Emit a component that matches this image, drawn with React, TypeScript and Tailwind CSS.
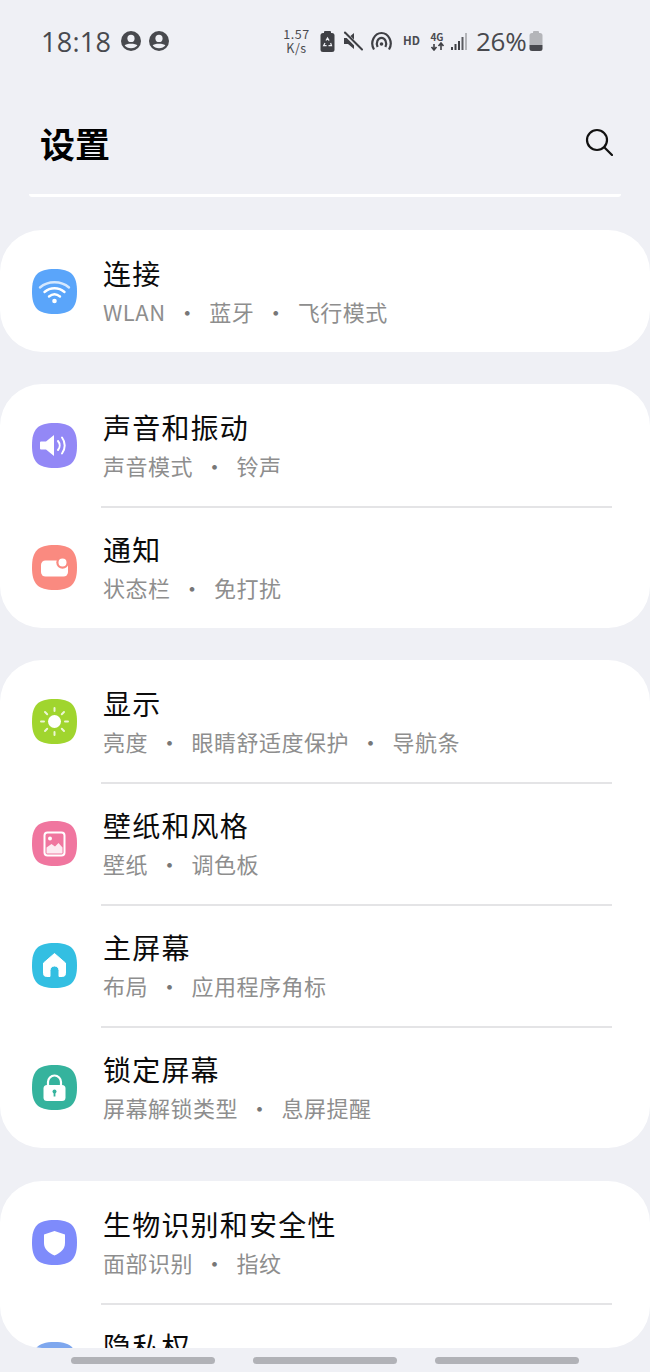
import React from "react";

const SQ = "M22.5 0C39 0 45 6 45 22.5C45 39 39 45 22.5 45C6 45 0 39 0 22.5C0 6 6 0 22.5 0Z";

function Tile({ color, children }: { color: string; children?: React.ReactNode }) {
  return (
    <svg width="45" height="45" viewBox="0 0 45 45" className="shrink-0">
      <path d={SQ} fill={color} />
      {children}
    </svg>
  );
}

const Wifi = () => (
  <Tile color="#5aa5fa">
    <g fill="none" stroke="#fff" strokeWidth="2.4" strokeLinecap="round">
      <path d="M8 18.5C16 11.5 29 11.5 37 18.5" opacity="0.75" />
      <path d="M12.5 23C18.5 18 26.5 18 32.5 23" />
      <path d="M17 27.5C20.5 24.7 24.5 24.7 28 27.5" />
    </g>
    <circle cx="22.5" cy="32" r="2.3" fill="#fff" />
  </Tile>
);

const Sound = () => (
  <Tile color="#9388f6">
    <path d="M9 18.5h5l8-6.5v21l-8-6.5H9a1 1 0 0 1-1-1v-6a1 1 0 0 1 1-1Z" fill="#fff" />
    <path d="M26 18c2.2 2.6 2.2 6.4 0 9" fill="none" stroke="#fff" strokeWidth="2" strokeLinecap="round" />
    <path d="M30 14.5c3.6 4.6 3.6 11.4 0 16" fill="none" stroke="#fff" strokeWidth="2" strokeLinecap="round" />
  </Tile>
);

const Notify = () => (
  <Tile color="#fa8a80">
    <rect x="9" y="15.5" width="27" height="16" rx="4.5" fill="#fff" />
    <circle cx="30.5" cy="17.5" r="6.2" fill="#fa8a80" />
    <circle cx="30.5" cy="17.5" r="4" fill="#fff" />
  </Tile>
);

const Sun = () => (
  <Tile color="#a0d52e">
    <circle cx="22.5" cy="22.5" r="6.5" fill="#fff" />
    <g stroke="#fff" strokeWidth="2" strokeLinecap="round" opacity="0.8">
      <path d="M22.5 9v3M22.5 33v3M9 22.5h3M33 22.5h3M13 13l2.2 2.2M29.8 29.8L32 32M13 32l2.2-2.2M29.8 15.2L32 13" />
    </g>
  </Tile>
);

const Wallpaper = () => (
  <Tile color="#f0769f">
    <rect x="12.5" y="11.5" width="20" height="23" rx="3" fill="none" stroke="#fff" strokeWidth="2" />
    <circle cx="18" cy="17.5" r="2" fill="#fff" />
    <path d="M14.5 32.5v-6l5-3.5 3.5 2.5 3.5-3.5 4 4.5v6Z" fill="#fff" opacity="0.85" />
  </Tile>
);

const Home = () => (
  <Tile color="#33bfe2">
    <path d="M22.5 10.5L33.5 20v10.5a3 3 0 0 1-3 3h-3.5v-6a4.5 4.5 0 0 0-9 0v6h-3.5a3 3 0 0 1-3-3V20Z" fill="#fff" stroke="#fff" strokeLinejoin="round" />
  </Tile>
);

const Lock = () => (
  <Tile color="#35b39d">
    <path d="M16 21v-4a6.5 6.5 0 0 1 13 0v4" fill="none" stroke="#fff" strokeWidth="2.2" />
    <rect x="11.5" y="20" width="22" height="16" rx="3.5" fill="#fff" />
    <circle cx="22.5" cy="26.5" r="2" fill="#35b39d" />
    <rect x="21.6" y="27" width="1.8" height="4.5" fill="#35b39d" />
  </Tile>
);

const Shield = () => (
  <Tile color="#7e8bfb">
    <path d="M22.5 11L33 14.5v8.5c0 6-4.5 10-10.5 12.5C16.5 33 12 29 12 23v-8.5Z" fill="#fff" />
  </Tile>
);

const Privacy = () => <Tile color="#7ea7ee" />;

type RowT = { title: string; sub: string[]; icon: React.ReactNode };

function Row({ row, divider }: { row: RowT; divider: boolean }) {
  return (
    <div className="relative flex h-[122px] items-center pl-8">
      {row.icon}
      <div className="ml-[26px] flex h-[76px] min-w-0 flex-col">
        <div className="mt-[1px] h-[39px] text-[28px] leading-[38px] tracking-[1.2px] text-[#0b0b0b]">{row.title}</div>
        {row.sub.length > 0 && (
          <div className="flex h-[36px] items-center text-[22px] leading-[36px] tracking-[0.5px] text-[#8e8e8e]">
            {row.sub.map((s, i) => (
              <React.Fragment key={s}>
                {i > 0 && <span className="mx-[10.5px] text-[#777]">·</span>}
                <span>{s}</span>
              </React.Fragment>
            ))}
          </div>
        )}
      </div>
      {divider && <div className="absolute -bottom-[2px] left-[101px] right-[38px] z-10 h-[2px] bg-[#e4e4e6]" />}
    </div>
  );
}

function Card({ rows }: { rows: RowT[] }) {
  return (
    <div className="shrink-0 overflow-hidden rounded-[42px] bg-white">
      {rows.map((r, i) => (
        <Row key={r.title} row={r} divider={i < rows.length - 1} />
      ))}
    </div>
  );
}

const Person = () => (
  <svg width="20" height="20" viewBox="0 0 20 20">
    <circle cx="10" cy="10" r="10" fill="#48494e" />
    <circle cx="10" cy="7.4" r="3.6" fill="#eff0f5" />
    <path d="M3.6 14.6c1.5-2.6 11.3-2.6 12.8 0-1.4 1.6-3.6 2.6-6.4 2.6s-5-1-6.4-2.6Z" fill="#eff0f5" />
  </svg>
);

function StatusRight() {
  return (
    <div className="flex items-center text-[#4a4b50]">
      <div className="flex w-[29px] flex-col items-center text-[12.5px] leading-[14px] tracking-[0.5px]">
        <span>1.57</span>
        <span>K/s</span>
      </div>
      <svg width="15" height="21" viewBox="0 0 15 21" className="ml-[9px]">
        <rect x="4" y="0" width="7" height="3" rx="1" fill="#3f4045" />
        <rect x="0.5" y="2" width="14" height="19" rx="2.5" fill="#3f4045" />
        <path d="M6 9.5L7.5 7l1.6 2.6M10.6 12l.9 2.6H8.5M6.6 14.6H3.6L5 12" fill="none" stroke="#eff0f5" strokeWidth="1.2" />
      </svg>
      <svg width="20" height="20" viewBox="0 0 20 20" className="ml-[8px]">
        <path d="M1 7h4l6-5v16l-6-5H1Z" fill="#3f4045" />
        <path d="M1 1.5L18 18.5" stroke="#eff0f5" strokeWidth="4" />
        <path d="M2 1.5L19 18.5" stroke="#3f4045" strokeWidth="2" strokeLinecap="round" />
      </svg>
      <svg width="23" height="20" viewBox="0 0 23 20" fill="none" stroke="#3f4045" strokeWidth="2.2" className="ml-[7px]">
        <path d="M4 18.5C-0.5 11 4.5 2 11.5 2s12 9 7.5 16.5" />
        <path d="M7.6 16C5.5 11.5 8 6.8 11.5 6.8s6 4.7 3.9 9.2" />
        <circle cx="11.5" cy="13" r="1.8" fill="#3f4045" stroke="none" />
      </svg>
      <span className="ml-[10px] w-[17px] text-[11.5px] font-bold leading-none">HD</span>
      <div className="ml-[9px] flex w-[16px] flex-col items-center">
        <span className="text-[10px] font-bold leading-[10px]">4G</span>
        <svg width="15" height="9" viewBox="0 0 15 9">
          <path d="M4 8V2M1.5 5L4 8l2.5-3M11 1v7M8.5 4L11 1l2.5 3" fill="none" stroke="#3f4045" strokeWidth="1.6" />
        </svg>
      </div>
      <svg width="16" height="17" viewBox="0 0 16 17" className="ml-[6px]">
        <rect x="0" y="14" width="2" height="3" fill="#3f4045" />
        <rect x="3.5" y="11" width="2" height="6" fill="#3f4045" />
        <rect x="7" y="8" width="2" height="9" fill="#3f4045" />
        <rect x="10.5" y="4" width="2" height="13" fill="#5a5b60" />
        <rect x="14" y="0" width="2" height="17" fill="#b4b5b9" />
      </svg>
      <span className="ml-[9px] w-[49px] font-['Open_Sans','Liberation_Sans',sans-serif] text-[26px] leading-none tracking-[-0.3px] text-[#48494e]">26%</span>
      <svg width="14" height="20" viewBox="0 0 14 20" className="ml-[4px]">
        <rect x="4" y="0" width="6" height="3" rx="1" fill="#b4b5b9" />
        <path d="M0.5 4.5a2.5 2.5 0 0 1 2.5-2.5h8a2.5 2.5 0 0 1 2.5 2.5V14H.5Z" fill="#b4b5b9" />
        <path d="M.5 14h13v3.5a2.5 2.5 0 0 1-2.5 2.5H3a2.5 2.5 0 0 1-2.5-2.5Z" fill="#48494e" />
      </svg>
    </div>
  );
}

const wlan: RowT[] = [{ title: "连接", sub: ["WLAN", "蓝牙", "飞行模式"], icon: <Wifi /> }];
const sound: RowT[] = [
  { title: "声音和振动", sub: ["声音模式", "铃声"], icon: <Sound /> },
  { title: "通知", sub: ["状态栏", "免打扰"], icon: <Notify /> },
];
const display: RowT[] = [
  { title: "显示", sub: ["亮度", "眼睛舒适度保护", "导航条"], icon: <Sun /> },
  { title: "壁纸和风格", sub: ["壁纸", "调色板"], icon: <Wallpaper /> },
  { title: "主屏幕", sub: ["布局", "应用程序角标"], icon: <Home /> },
  { title: "锁定屏幕", sub: ["屏幕解锁类型", "息屏提醒"], icon: <Lock /> },
];
const security: RowT[] = [
  { title: "生物识别和安全性", sub: ["面部识别", "指纹"], icon: <Shield /> },
  { title: "隐私权", sub: [], icon: <Privacy /> },
];

export default function App() {
  return (
    <div className="flex h-[1372px] w-[650px] flex-col overflow-hidden bg-[#eff0f5] font-['Noto_Sans_CJK_SC','Noto_Sans',sans-serif]">
      <div className="flex h-[82px] shrink-0 items-center pl-[41px] pr-[107px]">
        <span className="w-[70px] font-['Open_Sans','Liberation_Sans',sans-serif] text-[27px] leading-none tracking-[0.3px] text-[#48494e]">18:18</span>
        <div className="ml-[10px] flex gap-[8px]">
          <Person />
          <Person />
        </div>
        <div className="ml-auto">
          <StatusRight />
        </div>
      </div>
      <div className="flex h-[112px] shrink-0 items-center justify-between pl-[40px] pr-[37px] pt-[8px]">
        <h1 className="text-[35px] font-bold leading-none text-black">设置</h1>
        <svg width="28" height="28" viewBox="0 0 28 28" fill="none" stroke="#111" strokeWidth="2.2" strokeLinecap="round">
          <circle cx="12" cy="12" r="10" />
          <path d="M19.5 19.5L27 27" />
        </svg>
      </div>
      <div className="mx-[29px] h-[3px] shrink-0 rounded-b-[6px] bg-white" />
      <div className="mt-[33px] flex min-h-0 flex-1 flex-col gap-[32px]">
        <Card rows={wlan} />
        <Card rows={sound} />
        <Card rows={display} />
        <div className="mt-px min-h-0 flex-1 overflow-hidden rounded-[42px] bg-white">
          {security.map((r, i) => (
            <Row key={r.title} row={r} divider={i === 0} />
          ))}
        </div>
      </div>
      <div className="flex h-[24px] shrink-0 items-start justify-center gap-[38px] pt-[9px]">
        <div className="h-[7px] w-[144px] rounded-full bg-[#b1b2b7]" />
        <div className="h-[7px] w-[144px] rounded-full bg-[#b1b2b7]" />
        <div className="h-[7px] w-[144px] rounded-full bg-[#b1b2b7]" />
      </div>
    </div>
  );
}
